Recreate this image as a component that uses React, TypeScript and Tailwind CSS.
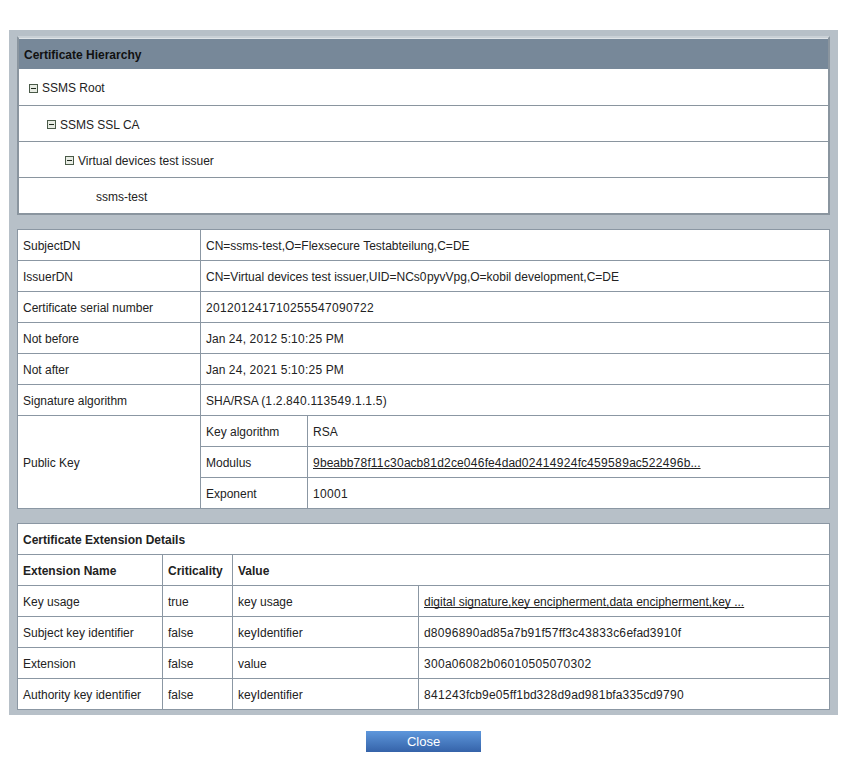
import React from 'react';

const font = { fontFamily: '"Liberation Sans", Arial, sans-serif' };

const tree = [
  { label: 'SSMS Root', level: 0, open: true },
  { label: 'SSMS SSL CA', level: 1, open: true },
  { label: 'Virtual devices test issuer', level: 2, open: true },
  { label: 'ssms-test', level: 3, open: false },
];

const details: [string, string][] = [
  ['SubjectDN', 'CN=ssms-test,O=Flexsecure Testabteilung,C=DE'],
  ['IssuerDN', 'CN=Virtual devices test issuer,UID=NCs0pyvVpg,O=kobil development,C=DE'],
  ['Certificate serial number', '201201241710255547090722'],
  ['Not before', 'Jan 24, 2012 5:10:25 PM'],
  ['Not after', 'Jan 24, 2021 5:10:25 PM'],
  ['Signature algorithm', 'SHA/RSA (1.2.840.113549.1.1.5)'],
];

const extensions = [
  { name: 'Key usage', crit: 'true', key: 'key usage', value: 'digital signature,key encipherment,data encipherment,key ...', link: true },
  { name: 'Subject key identifier', crit: 'false', key: 'keyIdentifier', value: 'd8096890ad85a7b91f57ff3c43833c6efad3910f' },
  { name: 'Extension', crit: 'false', key: 'value', value: '300a06082b06010505070302' },
  { name: 'Authority key identifier', crit: 'false', key: 'keyIdentifier', value: '841243fcb9e05ff1bd328d9ad981bfa335cd9790' },
];

// digits render a touch wider in the original (hinted advances)
const nums = (text: string) =>
  text.split(/(\d+)/).map((part, i) =>
    /^\d+$/.test(part) ? (
      <span key={i} className="tracking-[0.33px]">{part}</span>
    ) : (
      part
    )
  );

const MinusIcon = () => (
  <svg width="9" height="9" viewBox="0 0 9 9" className="shrink-0">
    <rect x="0.5" y="0.5" width="8" height="8" fill="#e8ece4" stroke="#4a5a48" />
    <rect x="2" y="4" width="5" height="1" fill="#1f2a1e" />
  </svg>
);

const td = 'border border-[#8b97a3] px-[5px] pt-[2px] pb-0 h-[31px] align-middle';
const link = 'underline [text-decoration-skip-ink:none]';

export default function App() {
  return (
    <div className="w-[847px] h-[759px] bg-white text-[12px] text-[#222]" style={font}>
      <div className="pt-[30px] px-[9px]">
        <div className="bg-[#b7c0c8] px-[8px] pt-[6px] pb-[5px]">
          {/* Hierarchy */}
          <div className="border-2 border-[#8a959f] border-t-[#c9d0d6] bg-white w-[813px]">
            <div className="bg-[#778899] h-[31px] flex items-center px-[5px] pt-[2px] font-bold text-[#111] border-t border-[#dfe4e8]">
              Certificate Hierarchy
            </div>
            {tree.map((n, i) => (
              <div
                key={n.label}
                className={`h-[36px] flex items-center gap-[4px] pt-[2px] ${i > 0 ? 'border-t border-[#8a959f]' : ''}`}
                style={{ paddingLeft: 10 + n.level * 18 + (n.open ? 0 : 13) }}
              >
                {n.open && <MinusIcon />}
                <span>{n.label}</span>
              </div>
            ))}
          </div>

          {/* Details */}
          <table className="mt-[14px] w-[813px] border-collapse bg-white">
            <tbody>
              {details.map(([k, v]) => (
                <tr key={k}>
                  <td className={`${td} w-[183px]`}>{k}</td>
                  <td className={td} colSpan={2}>{nums(v)}</td>
                </tr>
              ))}
              <tr>
                <td className={td} rowSpan={3}>Public Key</td>
                <td className={`${td} w-[107px]`}>Key algorithm</td>
                <td className={td}>RSA</td>
              </tr>
              <tr>
                <td className={td}>Modulus</td>
                <td className={td}>
                  <span className={link}>{nums('9beabb78f11c30acb81d2ce046fe4dad02414924fc459589ac522496b...')}</span>
                </td>
              </tr>
              <tr>
                <td className={td}>Exponent</td>
                <td className={td}>{nums('10001')}</td>
              </tr>
            </tbody>
          </table>

          {/* Extensions */}
          <table className="mt-[14px] w-[813px] border-collapse bg-white">
            <tbody>
              <tr>
                <td className={`${td} font-bold`} colSpan={4}>Certificate Extension Details</td>
              </tr>
              <tr className="font-bold">
                <td className={`${td} w-[145px]`}>Extension Name</td>
                <td className={`${td} w-[70px]`}>Criticality</td>
                <td className={td} colSpan={2}>Value</td>
              </tr>
              {extensions.map((e) => (
                <tr key={e.name}>
                  <td className={td}>{e.name}</td>
                  <td className={td}>{e.crit}</td>
                  <td className={`${td} w-[186px]`}>{e.key}</td>
                  <td className={td}>{e.link ? <span className={link}>{e.value}</span> : nums(e.value)}</td>
                </tr>
              ))}
            </tbody>
          </table>
        </div>
        <div className="flex justify-center pt-[16px]">
          <button className="w-[115px] h-[21px] bg-gradient-to-b from-[#5e97dc] to-[#3563a9] text-white text-[13px]" style={font}>
            Close
          </button>
        </div>
      </div>
    </div>
  );
}
